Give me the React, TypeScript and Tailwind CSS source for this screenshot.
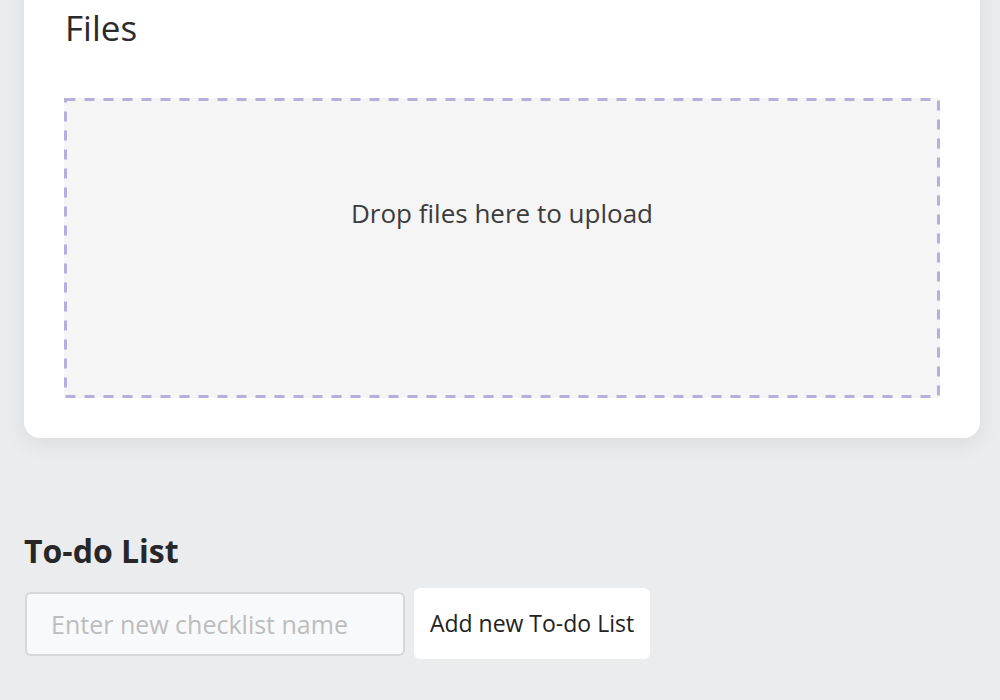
import { useState } from 'react';

export default function App() {
  const [listName, setListName] = useState('');

  return (
    <div
      className="w-[1000px] h-[700px] overflow-hidden bg-[#ebecee] pl-6 pr-5"
      style={{ fontFamily: '"Open Sans", "Noto Sans", sans-serif' }}
    >
      {/* Files card */}
      <section className="-mt-6 rounded-2xl bg-white px-10 pt-[28px] pb-10 shadow-[0_6px_22px_rgba(0,0,0,0.07)]">
        <h2 className="text-[35px] leading-[48px] text-[#2b2b2b] pl-px">Files</h2>
        <div className="relative mt-[46px] h-[300px] bg-[#f5f5f5] flex items-center justify-center">
          <svg className="absolute inset-0 w-full h-full" width="876" height="300">
            <rect
              x="1.5"
              y="1.5"
              width="873"
              height="297"
              fill="none"
              stroke="#b6aedc"
              strokeWidth="3"
              strokeDasharray="10 9"
            />
          </svg>
          <span className="text-[26px] text-[#3c3c3c] -mt-[70px]">Drop files here to upload</span>
        </div>
      </section>

      {/* To-do list */}
      <section className="mt-[93px]">
        <h3 className="text-[32px] leading-[40px] font-bold text-[#27272a]">To-do List</h3>
        <div className="mt-[17px] flex items-center gap-[9px]">
          <input
            value={listName}
            onChange={(e) => setListName(e.target.value)}
            placeholder="Enter new checklist name"
            className="ml-px w-[380px] h-[64px] rounded-md border-2 border-[#d6d7d9] bg-[#f8f9fa] px-6 text-[25px] text-[#333] placeholder:text-[#bdbdbd] outline-none"
          />
          <button className="h-[71px] w-[236px] rounded-md bg-white text-[23px] text-[#222]">
            Add new To-do List
          </button>
        </div>
      </section>
    </div>
  );
}
